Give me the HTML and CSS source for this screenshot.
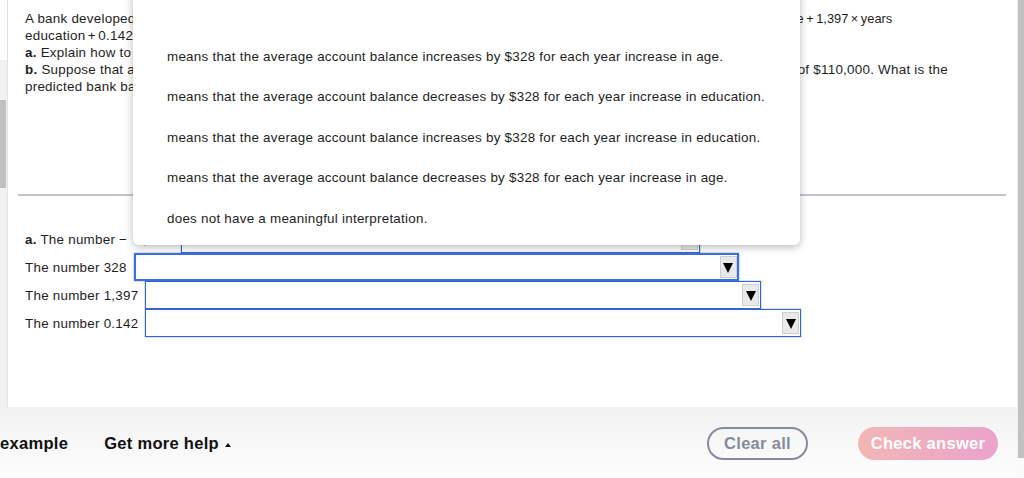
FILE: index.html
```html
<!DOCTYPE html>
<html>
<head>
<meta charset="utf-8">
<link rel="stylesheet" href="styles.css">
</head>
<body>
<div class="app">
  <div class="page">
    <div class="top">
      <div class="lscroll"><div class="lthumb"></div></div>
      <main class="main">
        <div class="question">
          <div class="line">A bank developed a regression model to predict account balances for customers, giving: Predicted balance<span class="math"> = −4,250 + 328 × age + 1,397 × years</span></div>
          <div class="line"><span class="eq">education + 0.142 × income.</span></div>
          <div class="line"><b>a.</b> Explain how to interpret the coefficients of the model.</div>
          <div class="line"><b>b.</b> Suppose that a person is 42 years old, has 16 years of education beyond high school, and has a yearly household income of $110,000. What is the</div>
          <div class="line">predicted bank balance?</div>
        </div>
        <div class="rule"></div>
        <div class="answers">
          <div class="row"><span class="lbl"><b>a.</b> The number −&nbsp;&nbsp;4,250:</span><span class="sel w0"><span class="arrow"></span></span></div>
          <div class="row"><span class="lbl">The number 328</span><span class="sel w1 focus"><span class="arrow"></span></span></div>
          <div class="row"><span class="lbl">The number 1,397</span><span class="sel w2"><span class="arrow"></span></span></div>
          <div class="row"><span class="lbl">The number 0.142</span><span class="sel w3"><span class="arrow"></span></span></div>
        </div>
        <ul class="popup">
          <li class="opt"></li>
          <li class="opt">means that the average account balance increases by $328 for each year increase in age.</li>
          <li class="opt">means that the average account balance decreases by $328 for each year increase in education.</li>
          <li class="opt">means that the average account balance increases by $328 for each year increase in education.</li>
          <li class="opt">means that the average account balance decreases by $328 for each year increase in age.</li>
          <li class="opt">does not have a meaningful interpretation.</li>
        </ul>
      </main>
    </div>
    <footer class="footer">
      <div class="fleft">
        <span class="flink">example</span>
        <span class="flink">Get more help<span class="tri"></span></span>
      </div>
      <div class="fright">
        <span class="btn clear">Clear all</span>
        <span class="btn check">Check answer</span>
      </div>
    </footer>
  </div>
  <div class="rscroll"><div class="rthumb"></div><div class="rend"></div></div>
</div>
</body>
</html>
```
FILE: styles.css
```css
* { box-sizing: border-box; }
html, body { margin: 0; padding: 0; }
body {
  width: 1024px;
  height: 478px;
  overflow: hidden;
  background: #fff;
  font-family: "Liberation Sans", Arial, sans-serif;
  color: #1e1e1e;
}
.app { display: flex; width: 1024px; height: 478px; }
.page { display: flex; flex-direction: column; width: 1017px; height: 478px; }
.top { display: flex; height: 407px; }
.lscroll {
  width: 8px;
  flex: none;
  background: linear-gradient(#fff 0, #fff 60px, #f1f1f1 60px);
  border-right: 1px solid #e2e2e2;
  padding-top: 100px;
}
.lthumb { width: 6px; height: 88px; background: #c1c1c1; }
.main {
  position: relative;
  flex: 1;
  background: #fff;
  padding: 10px 11px 0 10px;
}
.question { padding-left: 7px; font-size: 13.4px; letter-spacing: 0.25px; line-height: 17px; }
.line { white-space: nowrap; height: 17px; overflow: visible; }
.math { font-size: 12.8px; letter-spacing: 0; word-spacing: -1px; line-height: 1; }
.eq { word-spacing: -1.5px; }
.rule { height: 2px; background: #c0c4cd; margin-top: 99px; }
.answers { padding-left: 7px; margin-top: 29px; font-size: 13.4px; letter-spacing: 0.25px; }
.row { display: flex; align-items: center; gap: 7px; height: 28px; }
.lbl { white-space: nowrap; }
.sel {
  height: 28px;
  border: 1px solid #3465cc;
  box-shadow: 0 0 1px 0 #3465cc;
  display: flex;
  align-items: center;
  justify-content: flex-end;
  padding-right: 1px;
  background: #fff;
}
.sel.focus { border: 2px solid #3d6fd6; box-shadow: 0 0 2px rgba(61,111,214,0.6); padding-right: 0; }
.w0 { width: 519px; }
.w1 { width: 605px; }
.w2 { width: 616px; }
.w3 { width: 656px; }
.arrow {
  width: 17px;
  height: 22px;
  background: #e9e9e9;
  border: 1px solid #cfcfcf;
  display: flex;
  align-items: center;
  justify-content: center;
}
.arrow::after {
  content: "";
  width: 0;
  height: 0;
  border-left: 5px solid transparent;
  border-right: 5px solid transparent;
  border-top: 10px solid #000;
  margin-top: 1px;
}
.popup {
  position: absolute;
  left: 125px;
  top: -10px;
  width: 667px;
  margin: 0;
  padding: 6px 0 6px 0;
  list-style: none;
  background: #fff;
  border-radius: 0 0 6px 6px;
  box-shadow: 0 2px 8px rgba(0,0,0,0.28);
}
.opt {
  height: 40.5px;
  line-height: 40.5px;
  padding-left: 34px;
  font-size: 13.4px;
  letter-spacing: 0.25px;
  color: #1e1e1e;
  white-space: nowrap;
}
.footer {
  height: 71px;
  background: linear-gradient(#f2f2f2, #fdfdfd);
  display: flex;
  align-items: center;
  justify-content: space-between;
  padding: 2px 19px 0 0;
}
.fleft { display: flex; gap: 36px; font-weight: bold; font-size: 16.5px; letter-spacing: 0.3px; color: #111; }
.flink { display: flex; align-items: center; }
.tri {
  width: 0;
  height: 0;
  margin-left: 6px;
  margin-top: 2px;
  border-left: 3px solid transparent;
  border-right: 3px solid transparent;
  border-bottom: 4px solid #111;
}
.fright { display: flex; gap: 50px; }
.btn {
  height: 33px;
  border-radius: 17px;
  font-weight: bold;
  font-size: 16.5px;
  letter-spacing: 0.3px;
  display: flex;
  align-items: center;
  justify-content: center;
}
.clear { width: 101px; border: 2px solid #868b9c; color: #868b9c; }
.check { width: 140px; color: #fff; background: linear-gradient(90deg, #f2b6b4, #eba2cc); }
.rscroll { width: 7px; flex: none; background: #f1f1f1; display: flex; flex-direction: column; }
.rthumb { height: 458px; margin-left: 1px; background: #c1c1c1; }
.rend { flex: 1; background: #fafafa; }
```
